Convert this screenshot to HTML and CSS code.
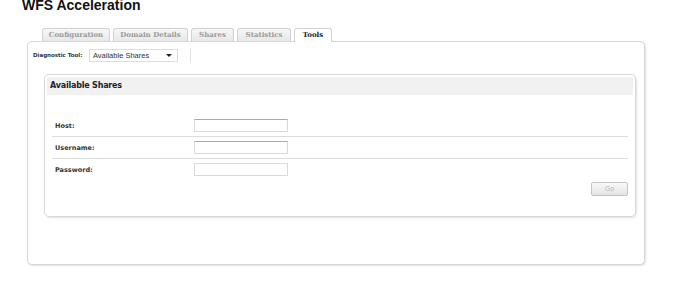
FILE: index.html
```html
<!DOCTYPE html>
<html>
<head>
<meta charset="utf-8">
<link rel="stylesheet" href="styles.css">
</head>
<body>
<h1 class="title">WFS Acceleration</h1>
<div class="tabs">
  <div class="tab w1">Configuration</div>
  <div class="tab w2">Domain Details</div>
  <div class="tab w3">Shares</div>
  <div class="tab w4">Statistics</div>
  <div class="tab w5 active">Tools</div>
</div>
<div class="panel">
  <div class="toolbar">
    <span class="tool-label">Diagnostic Tool:</span>
    <div class="select"><span>Available Shares</span><span class="caret"></span></div>
    <span class="vsep"></span>
  </div>
  <div class="box">
    <div class="box-head">Available Shares</div>
    <div class="form">
      <div class="row"><span class="label">Host:</span><span class="input"></span></div>
      <div class="row"><span class="label">Username:</span><span class="input"></span></div>
      <div class="row last"><span class="label">Password:</span><span class="input light"></span></div>
    </div>
    <div class="actions"><span class="btn">Go</span></div>
  </div>
</div>
</body>
</html>
```
FILE: styles.css
```css
html, body { margin: 0; padding: 0; background: #fff; }
body { font-family: "Liberation Sans", Arial, sans-serif; color: #222; width: 680px; height: 295px; overflow: hidden; }
.title { margin: -3px 0 0 22px; font-size: 14px; line-height: 16px; font-weight: bold; color: #111; height: 16px; }
.tabs { display: flex; gap: 3px; margin: 15px 0 0 42px; height: 13px; align-items: flex-end; }
.tab { height: 13px; box-sizing: border-box; border: 1px solid #d2d2d2; border-bottom: none; border-radius: 3px 3px 0 0;
  background: linear-gradient(#f7f7f7, #e8e8e8); font-family: "DejaVu Serif", serif; font-size: 7px; font-weight: bold;
  color: #9a9a9a; text-align: center; line-height: 12px; }
.w1 { width: 68px; } .w2 { width: 75px; } .w3 { width: 43px; } .w4 { width: 54px; } .w5 { width: 38px; }
.tab.active { background: #fff; color: #222; height: 14px; position: relative; z-index: 2; margin-bottom: -1px; }
.panel { margin-left: 27px; width: 618px; height: 224px; box-sizing: border-box; border: 1px solid #d6d6d6; border-radius: 5px;
  box-shadow: 1px 1px 2px rgba(0,0,0,0.12); background: #fff; padding: 6px 0 0 5px; }
.toolbar { display: flex; align-items: center; height: 14px; }
.tool-label { font-family: "DejaVu Sans", sans-serif; font-size: 5.5px; font-weight: bold; color: #333; width: 56px; }
.select { width: 89px; height: 13px; box-sizing: border-box; border: 1px solid #ddd; display: flex; align-items: center;
  justify-content: space-between; padding: 0 5px 0 3px; font-size: 7.5px; color: #333; }
.caret { width: 0; height: 0; border-left: 3px solid transparent; border-right: 3px solid transparent; border-top: 3px solid #222; }
.vsep { width: 1px; height: 14px; background: #e2e2e2; margin-left: 12px; }
.box { margin: 12px 0 0 11px; width: 592px; height: 143px; box-sizing: border-box; border: 1px solid #d8d8d8; border-radius: 5px;
  box-shadow: 1px 1px 2px rgba(0,0,0,0.12); padding: 2px 2px 0 2px; }
.box-head { height: 18px; background: #f1f1f1; font-family: "DejaVu Sans", sans-serif; font-size: 8px; font-weight: bold;
  color: #222; line-height: 18px; padding-left: 3px; letter-spacing: -0.2px; }
.form { margin: 20px 5px 0 5px; }
.row { display: flex; align-items: center; height: 21px; border-bottom: 1px solid #dcdcdc; }
.row.last { border-bottom: none; }
.label { width: 139px; padding-left: 3px; font-family: "DejaVu Sans", sans-serif; font-size: 6.5px; font-weight: bold; color: #333; }
.input { width: 94px; height: 13px; box-sizing: border-box; border: 1px solid #dadada; border-top-color: #aaa; }
.input.light { border-top-color: #dadada; }
.actions { display: flex; justify-content: flex-end; padding: 2px 5px 0 0; }
.btn { width: 37px; height: 14px; box-sizing: border-box; border: 1px solid #c4c4c4; border-radius: 2px;
  background: linear-gradient(#f8f8f8, #e4e4e4); color: #b8b8b8; font-size: 7px; text-align: center; line-height: 12px; }
```
